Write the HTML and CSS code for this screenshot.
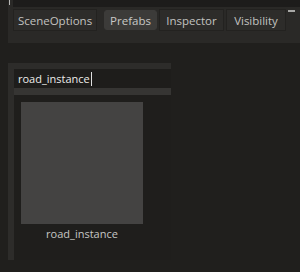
FILE: index.html
```html
<!DOCTYPE html>
<html lang="en">
<head>
  <meta charset="UTF-8" />
  <meta name="viewport" content="width=device-width, initial-scale=1.0" />
  <title>Prefabs</title>
  <link rel="stylesheet" href="styles.css">
</head>
<body>
  <div class="dock">
    <div class="dock-top">
      <span class="grip"></span>
      <div class="dock-slot"></div>
    </div>
    <div class="tabs">
      <div class="tab tab-scene">SceneOptions</div>
      <div class="tab tab-prefabs active">Prefabs</div>
      <div class="tab tab-inspector">Inspector</div>
      <div class="tab tab-visibility">Visibility</div>
      <span class="menu-line"></span>
    </div>
  </div>

  <div class="browser">
    <div class="search">
      <span class="search-text">road_instance</span><span class="caret"></span>
    </div>
    <div class="strip"></div>
    <div class="items">
      <div class="item">
        <div class="thumb"></div>
        <div class="item-name">road_instance</div>
      </div>
    </div>
  </div>
</body>
</html>
```

FILE: styles.css
```css
html, body {
  margin: 0;
  padding: 0;
  background: #201f1d;
  font-family: 'Open Sans', 'DejaVu Sans', sans-serif;
  font-size: 11px;
  height: 100%;
  overflow: hidden;
}
.dock {
  margin-left: 8px;
  height: 43px;
  background: #2a2927;
}
.dock-top {
  display: flex;
  height: 7px;
}
.grip {
  width: 1px;
  height: 5px;
  margin-left: 1px;
  margin-right: 3px;
  background: #b8b8b6;
}
.dock-slot {
  flex: 1;
  background: #1d1c1b;
}
.tabs {
  display: flex;
  align-items: flex-start;
  margin-top: 2px;
  padding-left: 5px;
  height: 22px;
}
.tab {
  box-sizing: border-box;
  height: 22px;
  line-height: 21px;
  text-align: center;
  color: #c2c2c0;
  background: #2d2c2a;
  border: 1px solid #232220;
  margin-right: 2px;
  font-size: 11.5px;
}
.tab-scene { width: 84px; margin-right: 7px; }
.tab-prefabs { width: 53px; }
.tab-inspector { width: 65px; }
.tab-visibility { width: 60px; }
.tab.active {
  background: #3c3b39;
  border-color: #3c3b39;
  border-radius: 3px;
  margin-top: 1px;
  height: 20px;
  line-height: 19px;
  color: #c8c8c6;
}
.menu-line {
  width: 7px;
  height: 2px;
  margin-top: 1px;
  background: #a8a8a6;
}
.browser {
  margin-top: 20px;
  margin-left: 8px;
  width: 163px;
  background: #2d2c2a;
  padding-top: 6px;
}
.search {
  margin-left: 6px;
  height: 19px;
  background: #1e1d1b;
  display: flex;
  align-items: center;
  padding-left: 4px;
  color: #ececea;
  font-size: 11px;
}
.caret {
  width: 1px;
  height: 14px;
  background: #e0e0e0;
  margin-left: 1px;
}
.strip {
  margin-left: 6px;
  height: 7px;
  background: #363533;
}
.items {
  margin-left: 6px;
  height: 165px;
  background: #1f1e1c;
  padding: 7px 0 0 7px;
  box-sizing: border-box;
}
.item {
  width: 122px;
  display: flex;
  flex-direction: column;
  align-items: center;
}
.thumb {
  width: 122px;
  height: 122px;
  background: #444342;
}
.item-name {
  margin-top: 2px;
  color: #c6c6c4;
}
```
